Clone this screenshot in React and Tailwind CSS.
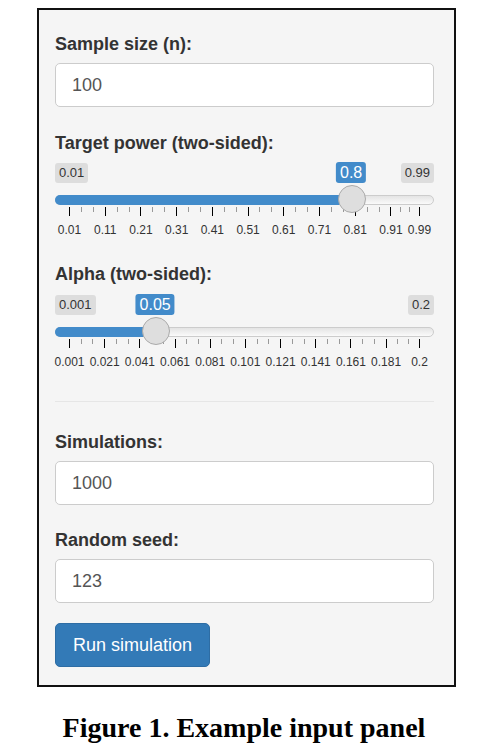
import React from 'react';

const sans = { fontFamily: '"Liberation Sans", Arial, sans-serif' };

const Slider = ({ min, max, value, majors, minLabel, maxLabel, valueLabel }) => {
  const pos = (v) => 14 + ((v - min) / (max - min)) * 350;
  const hx = pos(value);

  const minors = [];
  for (let i = 1; i < majors.length; i++) {
    const a = pos(majors[i - 1]);
    const b = pos(majors[i]);
    minors.push(a + (b - a) / 3, a + ((b - a) * 2) / 3);
  }

  return (
    <div className="flex flex-col w-full pt-[2px] pb-[4px]">
      <div className="relative flex justify-between items-start h-[20px]">
        <span className="h-[20px] px-[4px] rounded-[3px] bg-[#dddddd] text-[13px] leading-[20px] text-[#333]">{minLabel}</span>
        <span className="h-[20px] px-[4px] rounded-[3px] bg-[#dddddd] text-[13px] leading-[20px] text-[#333]">{maxLabel}</span>
        <span
          className="absolute -top-[1px] h-[21px] px-[4px] -translate-x-1/2 rounded-[3px] bg-[#428bca] text-[16px] leading-[21px] text-white"
          style={{ left: hx }}
        >
          {valueLabel}
        </span>
      </div>

      <div className="relative mt-[12px] h-[10px] rounded-full border border-[#cccccc] bg-gradient-to-b from-[#e4e4e4] to-[#fafafa]">
        <div className="absolute -left-px -top-px h-[10px] rounded-l-full bg-[#428bca]" style={{ width: hx }} />
      </div>

      <div className="relative mt-[2px] h-[9px]">
        {minors.map((x, i) => (
          <span key={'m' + i} className="absolute top-0 h-[5px] w-px bg-[#999]" style={{ left: Math.round(x) }} />
        ))}
        {majors.map((v, i) => (
          <span key={'M' + i} className="absolute top-0 h-[9px] w-px bg-black" style={{ left: Math.round(pos(v)) }} />
        ))}
        <div
          className="absolute -top-[22px] h-[28px] w-[28px] -translate-x-1/2 rounded-full border border-[#aaaaaa] bg-[#dedede]"
          style={{ left: hx + 0.5 }}
        />
      </div>

      <div className="relative mt-[7px] h-[14px]">
        {majors.map((v, i) => (
          <span
            key={'l' + i}
            className="absolute top-0 -translate-x-1/2 text-[12px] leading-[14px] text-[#333] whitespace-nowrap"
            style={{ left: pos(v) + 0.5 }}
          >
            {String(v)}
          </span>
        ))}
      </div>
    </div>
  );
};

const Label = ({ children, className = '' }) => (
  <div className={`text-[18px] leading-[26px] font-bold text-[#333] ${className}`}>{children}</div>
);

const Field = ({ label, value, className = '' }) => (
  <div className={className}>
    <Label>{label}</Label>
    <div className="mt-[6px] h-[44px] rounded-[5px] border border-[#cccccc] bg-white pl-[16px] flex items-center text-[18px] text-[#555]">
      {value}
    </div>
  </div>
);

const powerMajors = [0.01, 0.11, 0.21, 0.31, 0.41, 0.51, 0.61, 0.71, 0.81, 0.91, 0.99];
const alphaMajors = [0.001, 0.021, 0.041, 0.061, 0.081, 0.101, 0.121, 0.141, 0.161, 0.181, 0.2];

export default function App() {
  return (
    <div className="min-h-screen bg-white pt-[8px]" style={sans}>
      <div className="ml-[37px] w-[419px] border-2 border-[#111] bg-[#f5f5f5] pl-[16px] pr-[20px] pt-[21px] pb-[18px] flex flex-col">
        <Field label="Sample size (n):" value="100" />

        <Label className="mt-[23px]">Target power (two-sided):</Label>
        <div className="mt-[5px]">
          <Slider min={0.01} max={0.99} value={0.8} majors={powerMajors} minLabel="0.01" maxLabel="0.99" valueLabel="0.8" />
        </div>

        <Label className="mt-[20px]">Alpha (two-sided):</Label>
        <div className="mt-[6px]">
          <Slider min={0.001} max={0.2} value={0.05} majors={alphaMajors} minLabel="0.001" maxLabel="0.2" valueLabel="0.05" />
        </div>

        <div className="mt-[28px] border-t border-[#e6e6e6]" />

        <Field label="Simulations:" value="1000" className="mt-[27px]" />
        <Field label="Random seed:" value="123" className="mt-[22px]" />

        <button
          type="button"
          className="self-start mt-[20px] h-[44px] px-[17px] rounded-[5px] border border-[#2e6da4] bg-[#337ab7] text-[18px] text-white"
        >
          Run simulation
        </button>
      </div>

      <p
        className="mt-[25px] text-center text-[28px] leading-[32px] font-bold text-black"
        style={{ fontFamily: '"Liberation Serif", "Times New Roman", serif' }}
      >
        Figure 1. Example input panel
      </p>
    </div>
  );
}
